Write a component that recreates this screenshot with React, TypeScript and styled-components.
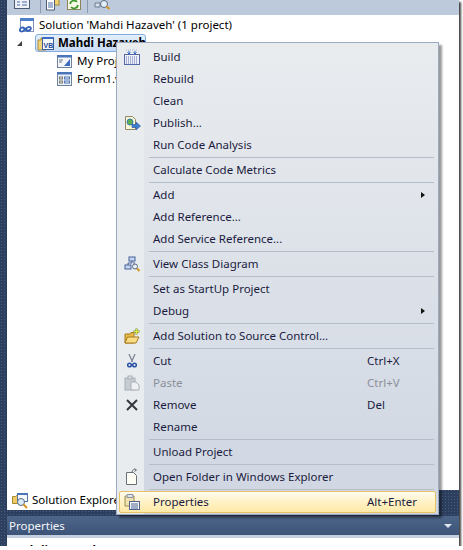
import React from "react";
import styled, { createGlobalStyle } from "styled-components";

const GlobalStyle = createGlobalStyle`
  html, body {
    margin: 0;
    padding: 0;
    background: #fff;
    font-family: "Noto Sans", "Open Sans", sans-serif;
  }
`;

const BuildIcon = () => (
  <svg width="16" height="16" viewBox="0 0 16 16">
    <rect x="0.500" y="5.500" width="15" height="10" fill="#eef1f8" stroke="#5468a8" />
    <path d="M2 8h12M2 10h12M2 12h12M2 14h12" stroke="#5a6cae" strokeDasharray="1 1" />
    <path d="M2 1h12" stroke="#a8b4d4" strokeDasharray="1 1" />
    <path d="M5 2v3M3.500 3.500 5 5l1.500-1.500M11 2v3M9.500 3.500 11 5l1.500-1.500" stroke="#2f63c4" fill="none" />
  </svg>
);

const PublishIcon = () => (
  <svg width="17" height="17" viewBox="0 0 17 17">
    <path d="M1.500 1.500h7l3 3v10h-10z" fill="#fbf6d8" stroke="#8d8a6a" />
    <circle cx="6" cy="7" r="3" fill="#5fae4f" stroke="#2f7fb0" />
    <path d="M8 9.500h4V7l4.500 4-4.500 4v-2.500H8z" fill="#3f7fd0" stroke="#274f98" strokeWidth=".6" />
  </svg>
);

const ClassDiagramIcon = () => (
  <svg width="17" height="17" viewBox="0 0 17 17">
    <rect x="5" y="1" width="6" height="4" fill="#c8d6ee" stroke="#44609c" />
    <rect x="1" y="9" width="6" height="4" fill="#c8d6ee" stroke="#44609c" />
    <path d="M8 5v2H4v2M9 7h2" stroke="#44609c" fill="none" />
    <circle cx="11" cy="10.500" r="2.500" fill="#e6eef8" stroke="#5a6a80" />
    <path d="m13 12.500 2.500 2.500" stroke="#d8941e" strokeWidth="2" />
  </svg>
);

const AddFolderIcon = () => (
  <svg width="17" height="17" viewBox="0 0 17 17">
    <path d="M1 15V6h5l1-1.500h3V15z" fill="#e8b848" stroke="#a67a1e" />
    <path d="M1 15l2.500-6H15l-3 6z" fill="#f8dc86" stroke="#a67a1e" />
    <path d="M12.500 0.500v6M9.500 3.500h6" stroke="#6e8e20" strokeWidth="2" />
    <path d="M12.500 1v5M10 3.500h5" stroke="#e8e83c" />
  </svg>
);

const CutIcon = () => (
  <svg width="10" height="14" viewBox="0 0 10 14">
    <path d="M2 0l3.500 8M8 0 4.500 8" stroke="#7d8492" strokeWidth="1.300" />
    <circle cx="2.500" cy="11" r="1.800" fill="none" stroke="#2850a8" strokeWidth="1.500" />
    <circle cx="7.500" cy="11" r="1.800" fill="none" stroke="#2850a8" strokeWidth="1.500" />
  </svg>
);

const PasteIcon = () => (
  <svg width="16" height="16" viewBox="0 0 16 16">
    <rect x="1" y="3" width="10" height="12" fill="#c6ccd2" stroke="#a8afb8" />
    <rect x="4" y="1" width="4" height="3" fill="#d8dce0" stroke="#a8afb8" />
    <path d="M7 7h5l3 3v5H7z" fill="#eef0f2" stroke="#a8afb8" />
  </svg>
);

const RemoveIcon = () => (
  <svg width="14" height="14" viewBox="0 0 14 14">
    <path d="M2 2l10 10M12 2 2 12" stroke="#33383f" strokeWidth="2" />
  </svg>
);

const OpenFolderIcon = () => (
  <svg width="14" height="18" viewBox="0 0 14 18">
    <path d="M1.500 5.500h7l3 3v9h-10z" fill="#fdfdf6" stroke="#6a7078" transform="translate(0 -1)" />
    <path d="M7 4c0-2 2-3 4-2M9.500 0.500 11.500 2l-2 1.500" fill="none" stroke="#6a7078" />
  </svg>
);

const PropertiesIcon = () => (
  <svg width="16" height="16" viewBox="0 0 16 16">
    <path d="M1 2h9v10H1z" fill="#f0e2ae" stroke="#9a8a58" />
    <path d="M3 0.500h6v3H3z" fill="#dfe4ea" stroke="#8a929c" />
    <rect x="5.500" y="7.500" width="10" height="8" fill="#f6f8fc" stroke="#4c6490" />
    <path d="M7 10h7M7 12h7M7 14h7" stroke="#4c6490" />
  </svg>
);

const SolutionIcon = () => (
  <svg width="17" height="17" viewBox="0 0 17 17">
    <rect x="2.500" y="1.500" width="13" height="13" fill="#fff" stroke="#7f94b8" />
    <rect x="2" y="1" width="14" height="3" fill="#4f7fc8" />
    <path d="M2 13c0-3 3-3 4.500-1.500S10 15 12 13s0-4-2.500-2.500S5 15 3 14.500 2 13 2 13z" fill="none" stroke="#3460b8" strokeWidth="1.800" />
  </svg>
);

const ProjectIcon = () => (
  <svg width="17" height="15" viewBox="0 0 17 15">
    <path d="M1 4h3V2h3v2h2v10H1z" fill="#f2d67c" stroke="#a88a38" />
    <rect x="5.500" y="1.500" width="11" height="12" fill="#f4f7fc" stroke="#3c5c94" />
    <rect x="5" y="1" width="12" height="2" fill="#3c6cc0" />
    <text x="6.500" y="11.500" fontSize="7" fontFamily="Liberation Sans, sans-serif" fontWeight="700" fill="#234a96">VB</text>
  </svg>
);

const MyProjectIcon = () => (
  <svg width="15" height="13" viewBox="0 0 15 13">
    <rect x="0.500" y="0.500" width="14" height="12" fill="#f4f6fa" stroke="#70819c" />
    <rect x="0" y="0" width="15" height="2.500" fill="#4c74b8" />
    <path d="M2 5h4M2 7h3" stroke="#667488" />
    <path d="M13 4v7H7z" fill="#3c6cc0" />
  </svg>
);

const FormIcon = () => (
  <svg width="15" height="14" viewBox="0 0 15 14">
    <rect x="0.500" y="0.500" width="14" height="13" fill="#eef2f8" stroke="#70819c" />
    <rect x="0" y="0" width="15" height="2.500" fill="#4c74b8" />
    <rect x="2.500" y="5" width="3" height="2" fill="none" stroke="#7a7a70" />
    <rect x="7.500" y="5" width="5" height="2" fill="none" stroke="#4c74b8" />
    <rect x="2.500" y="9" width="3" height="2" fill="none" stroke="#7a7a70" />
    <rect x="7.500" y="9" width="5" height="2" fill="none" stroke="#4c74b8" />
  </svg>
);

const ExplorerIcon = () => (
  <svg width="17" height="17" viewBox="0 0 17 17">
    <path d="M0.500 4.500h3l1-1h3v8h-7z" fill="#f0ca62" stroke="#a88a38" />
    <rect x="5.500" y="1.500" width="10" height="8" fill="#f4f7fc" stroke="#5474ac" />
    <rect x="5" y="1" width="11" height="2" fill="#4c74b8" />
    <circle cx="9" cy="10" r="3.500" fill="#d8eaf8" stroke="#5a6a80" />
    <path d="m11.500 12.500 3.500 3.500" stroke="#d8941e" strokeWidth="2" />
  </svg>
);

type MenuEntry =
  | { sep: true }
  | {
      sep?: false;
      label: string;
      icon?: React.ReactNode;
      shortcut?: string;
      arrow?: boolean;
      disabled?: boolean;
      active?: boolean;
    };

const entries: MenuEntry[] = [
  { label: "Build", icon: <BuildIcon /> },
  { label: "Rebuild" },
  { label: "Clean" },
  { label: "Publish...", icon: <PublishIcon /> },
  { label: "Run Code Analysis" },
  { sep: true },
  { label: "Calculate Code Metrics" },
  { sep: true },
  { label: "Add", arrow: true },
  { label: "Add Reference..." },
  { label: "Add Service Reference..." },
  { sep: true },
  { label: "View Class Diagram", icon: <ClassDiagramIcon /> },
  { sep: true },
  { label: "Set as StartUp Project" },
  { label: "Debug", arrow: true },
  { sep: true },
  { label: "Add Solution to Source Control...", icon: <AddFolderIcon /> },
  { sep: true },
  { label: "Cut", icon: <CutIcon />, shortcut: "Ctrl+X" },
  { label: "Paste", icon: <PasteIcon />, shortcut: "Ctrl+V", disabled: true },
  { label: "Remove", icon: <RemoveIcon />, shortcut: "Del" },
  { label: "Rename" },
  { sep: true },
  { label: "Unload Project" },
  { sep: true },
  { label: "Open Folder in Windows Explorer", icon: <OpenFolderIcon /> },
  { sep: true },
  { label: "Properties", icon: <PropertiesIcon />, shortcut: "Alt+Enter", active: true },
];

export default function App() {
  return (
    <>
      <GlobalStyle />
      <Frame>
        <Toolbar>
          <ToolIcon $left={13}>
            <svg width="18" height="15" viewBox="0 0 18 15">
              <rect x="1.500" y="-3.500" width="15" height="12" fill="#eef2f8" stroke="#4c5c74" />
              <path d="M4 2h3M9 2h5M4 5h3M9 5h5" stroke="#4c6ca4" />
            </svg>
          </ToolIcon>
          <ToolSep $left={40} />
          <ToolIcon $left={45}>
            <svg width="16" height="15" viewBox="0 0 16 15">
              <rect x="8" y="-2" width="6" height="7" fill="#f0d070" stroke="#a88a38" />
              <path d="M1.500-2h8v12h-8z" fill="#fff" stroke="#4c5c74" />
              <path d="M3 3h5M3 5h5M3 7h5" stroke="#4c6ca4" />
            </svg>
          </ToolIcon>
          <ToolIcon $left={67}>
            <svg width="15" height="15" viewBox="0 0 15 15">
              <rect x="0.500" y="-2" width="13" height="11.500" fill="#f8f8e8" stroke="#8a8458" />
              <path d="M3 4a4 4 0 0 1 7-2M11 5a4 4 0 0 1-7 2" fill="none" stroke="#3f9a2e" strokeWidth="1.800" />
            </svg>
          </ToolIcon>
          <ToolSep $left={87} />
          <ToolIcon $left={94}>
            <svg width="17" height="15" viewBox="0 0 17 15">
              <path d="M1 7h5V3H1z" fill="#d8e0ec" stroke="#6a7a90" />
              <circle cx="10" cy="4" r="3.500" fill="#e4eef8" stroke="#5a6a80" />
              <path d="m12.500 6.500 3 2.500" stroke="#d8941e" strokeWidth="2" />
            </svg>
          </ToolIcon>
        </Toolbar>

        <Tree>
          <TreeRow $indent={11}>
            <TreeIcon><SolutionIcon /></TreeIcon>
            <TreeLabel>Solution 'Mahdi Hazaveh' (1 project)</TreeLabel>
          </TreeRow>
          <TreeRow $indent={10}>
            <Expander />
            <Selected>
              <TreeIcon><ProjectIcon /></TreeIcon>
              <TreeLabel $bold>Mahdi Hazaveh</TreeLabel>
            </Selected>
          </TreeRow>
          <TreeRow $indent={49}>
            <TreeIcon><MyProjectIcon /></TreeIcon>
            <TreeLabel>My Project</TreeLabel>
          </TreeRow>
          <TreeRow $indent={49}>
            <TreeIcon><FormIcon /></TreeIcon>
            <TreeLabel>Form1.vb</TreeLabel>
          </TreeRow>
        </Tree>

        <TabStrip>
          <Tab>
            <ExplorerIcon />
            <TabLabel>Solution Explorer</TabLabel>
          </Tab>
        </TabStrip>

        <PropertiesHeader>
          <HeaderLabel>Properties</HeaderLabel>
          <DownArrow />
        </PropertiesHeader>
        <PropertiesBody>
          <PropertiesTitle>
            <strong>Mahdi Hazaveh</strong> Project Properties
          </PropertiesTitle>
        </PropertiesBody>

        <Menu>
          {entries.map((entry, i) =>
            entry.sep ? (
              <Separator key={i} />
            ) : (
              <Item key={i} $active={entry.active} $disabled={entry.disabled}>
                <ItemIcon>{entry.icon}</ItemIcon>
                <ItemLabel>{entry.label}</ItemLabel>
                {entry.shortcut && <Shortcut>{entry.shortcut}</Shortcut>}
                {entry.arrow && <SubArrow />}
              </Item>
            )
          )}
        </Menu>
      </Frame>
    </>
  );
}

const Frame = styled.div`
  position: relative;
  box-sizing: border-box;
  width: 459px;
  height: 546px;
  padding-left: 7px;
  display: flex;
  flex-direction: column;
  background-color: #2d3f5e;
  background-image: radial-gradient(#4a5d7e 0.6px, transparent 0.7px);
  background-size: 3px 3px;
  box-shadow: 2px 2px 2px rgba(0, 0, 0, 0.75);
`;

const Toolbar = styled.div`
  position: relative;
  flex: none;
  height: 15px;
  overflow: hidden;
  background: #bccadc;
`;

const ToolIcon = styled.span<{ $left: number }>`
  position: absolute;
  top: 0;
  left: ${(p) => p.$left - 7}px;
  display: block;
  line-height: 0;
`;

const ToolSep = styled.span<{ $left: number }>`
  position: absolute;
  top: 0;
  left: ${(p) => p.$left - 7}px;
  width: 1px;
  height: 13px;
  background: #8b9ab0;
`;

const Tree = styled.div`
  flex: none;
  height: 475px;
  box-sizing: border-box;
  padding-top: 1px;
  background: #fff;
`;

const TreeRow = styled.div<{ $indent: number }>`
  display: flex;
  align-items: center;
  height: 18px;
  padding-left: ${(p) => p.$indent}px;
`;

const TreeIcon = styled.span`
  display: flex;
  align-items: center;
  justify-content: center;
  width: 17px;
  margin-right: 4px;
`;

const TreeLabel = styled.span<{ $bold?: boolean }>`
  font-size: 11.5px;
  line-height: 14px;
  color: #000;
  white-space: nowrap;
  font-weight: ${(p) => (p.$bold ? 700 : 400)};
`;

const Expander = styled.span`
  width: 0;
  height: 0;
  margin-right: 14px;
  border-left: 5px solid transparent;
  border-bottom: 5px solid #404040;
`;

const Selected = styled.div`
  display: flex;
  align-items: center;
  box-sizing: border-box;
  width: 111px;
  height: 18px;
  margin-left: -1px;
  padding-left: 1px;
  border: 1px solid #84acdd;
  border-radius: 3px;
  background: linear-gradient(#e2eefc, #c8dcf6);
`;

const TabStrip = styled.div`
  flex: none;
  height: 26px;
`;

const Tab = styled.div`
  display: flex;
  align-items: center;
  gap: 3px;
  height: 20px;
  width: 130px;
  padding-left: 5px;
  box-sizing: border-box;
  background: #fff;
  font-size: 11.5px;
  color: #000;
  white-space: nowrap;
`;

const TabLabel = styled.span`
  line-height: 14px;
`;

const PropertiesHeader = styled.div`
  flex: none;
  height: 19px;
  display: flex;
  align-items: center;
  justify-content: space-between;
  padding: 0 7px 0 2px;
  background: linear-gradient(#4d6589, #3d5479);
  font-size: 11.5px;
  color: #f4f6fa;
`;

const HeaderLabel = styled.span`
  line-height: 14px;
`;

const DownArrow = styled.span`
  width: 0;
  height: 0;
  border-left: 4px solid transparent;
  border-right: 4px solid transparent;
  border-top: 4px solid #dfe6f0;
`;

const PropertiesBody = styled.div`
  flex: 1;
  min-height: 0;
  overflow: hidden;
  box-sizing: border-box;
  border-top: 3px solid #c4d0e0;
  padding-left: 5px;
  background: #fff;
`;

const PropertiesTitle = styled.div`
  font-size: 11.5px;
  line-height: 14px;
  margin-top: 6px;
  color: #000;
  white-space: nowrap;
`;

const Menu = styled.div`
  position: absolute;
  top: 42px;
  left: 116px;
  width: 323px;
  box-sizing: border-box;
  padding: 3px 2px 1px;
  border: 1px solid #9baac0;
  background: linear-gradient(90deg, #e9ecee 27px, transparent 27px),
    linear-gradient(#e9ecef, #cfd6e2);
  box-shadow: 3px 3px 2px rgba(0, 0, 0, 0.4);
  font-size: 11.5px;
  color: #1b1b40;
`;

const Item = styled.div<{ $active?: boolean; $disabled?: boolean }>`
  position: relative;
  display: flex;
  align-items: center;
  box-sizing: border-box;
  height: 22px;
  border-radius: 2px;
  border: 1px solid ${(p) => (p.$active ? "#e5c365" : "transparent")};
  background: ${(p) =>
    p.$active ? "linear-gradient(#fffbf0, #fff3c8 45%, #ffe9a8)" : "transparent"};
  color: ${(p) => (p.$disabled ? "#8a8f98" : "inherit")};
`;

const ItemIcon = styled.span`
  flex: none;
  display: flex;
  align-items: center;
  justify-content: center;
  width: 24px;
  margin-right: 9px;
`;

const ItemLabel = styled.span`
  flex: none;
  width: 214px;
  line-height: 14px;
  white-space: nowrap;
`;

const Shortcut = styled.span`
  line-height: 14px;
  white-space: nowrap;
`;

const SubArrow = styled.span`
  position: absolute;
  right: 10px;
  top: 7px;
  width: 0;
  height: 0;
  border-top: 3.500px solid transparent;
  border-bottom: 3.500px solid transparent;
  border-left: 4px solid #111;
`;

const Separator = styled.div`
  height: 1px;
  margin: 1px 2px 1px 30px;
  background: #b6bdca;
`;
